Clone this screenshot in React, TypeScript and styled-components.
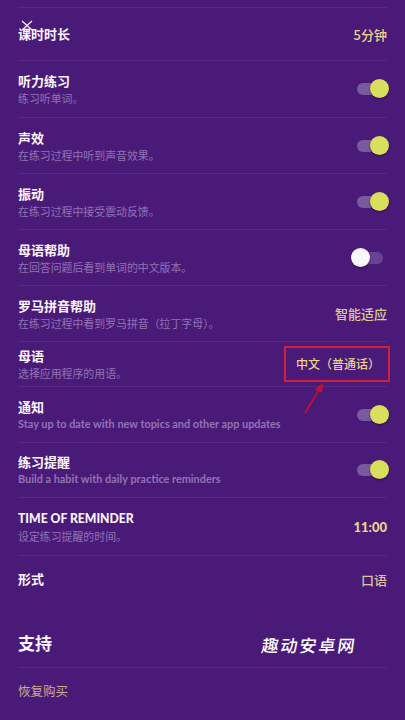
import React from "react";
import styled, { createGlobalStyle } from "styled-components";

const GlobalStyle = createGlobalStyle`
  html, body {
    margin: 0;
    padding: 0;
    background: #4a1a79;
  }
  body {
    font-family: Lato, "Noto Sans CJK SC", sans-serif;
    -webkit-font-smoothing: antialiased;
  }
`;

const Page = styled.div`
  position: relative;
  width: 405px;
  height: 720px;
  overflow: hidden;
  background: #4a1a79;
  box-sizing: border-box;
  padding: 7px 18px 0 18px;
`;

const List = styled.div`
  display: flex;
  flex-direction: column;
  border-top: 1px solid rgba(255, 255, 255, 0.07);
`;

const Row = styled.div<{ $h: number; $noLine?: boolean }>`
  display: flex;
  align-items: center;
  justify-content: space-between;
  height: ${(p) => p.$h}px;
  box-sizing: border-box;
  border-bottom: ${(p) =>
    p.$noLine ? "none" : "1px solid rgba(255, 255, 255, 0.07)"};
`;

const Texts = styled.div`
  display: flex;
  flex-direction: column;
  gap: 2px;
`;

const Title = styled.div<{ $caps?: boolean }>`
  color: #fbf7fd;
  font-family: ${(p) =>
    p.$caps ? 'Lato, "Noto Sans CJK SC", sans-serif' : '"Noto Sans CJK SC", sans-serif'};
  font-size: ${(p) => (p.$caps ? "12.2px" : "13px")};
  font-weight: ${(p) => (p.$caps ? 900 : 700)};
  line-height: 16px;
`;

const Sub = styled.div<{ $latin?: boolean }>`
  color: #9074b4;
  font-family: ${(p) =>
    p.$latin ? 'Lato, "Noto Sans CJK SC", sans-serif' : '"Noto Sans CJK SC", sans-serif'};
  font-size: 10.9px;
  font-weight: ${(p) => (p.$latin ? 700 : 400)};
  line-height: 14px;
`;

const Value = styled.div<{ $bold?: boolean; $tone?: string }>`
  color: ${(p) => p.$tone || "#ecd48c"};
  font-family: ${(p) =>
    p.$bold ? 'Lato, "Noto Sans CJK SC", sans-serif' : '"Noto Sans CJK SC", sans-serif'};
  font-size: 13px;
  font-weight: ${(p) => (p.$bold ? 900 : 500)};
`;

const Marked = styled(Value)`
  font-size: 12px;
  border: 2px solid #d21f3c;
  padding: 7px 8px 8px 10px;
  margin-right: -3px;
`;

const Switch = styled.div`
  position: relative;
  width: 38px;
  height: 20px;
  margin-right: -2px;
`;

const Track = styled.div<{ $on: boolean }>`
  position: absolute;
  left: 6px;
  right: 6px;
  top: 4px;
  height: 12px;
  border-radius: 6px;
  background: ${(p) => (p.$on ? "#7a5a9e" : "#6a4296")};
`;

const Thumb = styled.div<{ $on: boolean }>`
  position: absolute;
  top: 0;
  ${(p) => (p.$on ? "right: 0;" : "left: 0;")}
  width: 19px;
  height: 19px;
  border-radius: 50%;
  background: ${(p) => (p.$on ? "#d9df5c" : "#fbf8fd")};
  box-shadow: 0 1px 2px rgba(20, 0, 40, 0.55);
`;

const SectionRow = styled.div`
  display: flex;
  align-items: flex-end;
  justify-content: space-between;
  height: 66px;
  padding-bottom: 12px;
  box-sizing: border-box;
  border-bottom: 1px solid rgba(255, 255, 255, 0.07);
`;

const SectionTitle = styled.div`
  color: #fbf7fd;
  font-family: "Noto Sans CJK SC", sans-serif;
  font-size: 17px;
  font-weight: 700;
`;

const Watermark = styled.div`
  color: #ffffff;
  font-family: "Noto Sans CJK SC", sans-serif;
  font-size: 17px;
  font-weight: 500;
  letter-spacing: 2px;
  margin-right: 30px;
  transform: skewX(-8deg) translateY(2px);
`;

const LinkRow = styled.div`
  display: flex;
  align-items: center;
  height: 44px;
  color: #c8ae8c;
  font-family: "Noto Sans CJK SC", sans-serif;
  font-size: 12.5px;
`;

const CloseMark = styled.svg`
  position: absolute;
  left: 21px;
  top: 20px;
`;

const Arrow = styled.svg`
  position: absolute;
  left: 296px;
  top: 380px;
`;

const Toggle = ({ on }: { on: boolean }) => (
  <Switch>
    <Track $on={on} />
    <Thumb $on={on} />
  </Switch>
);

type Item = {
  title: string;
  sub?: string;
  latin?: boolean;
  caps?: boolean;
  h: number;
  toggle?: boolean;
  value?: string;
  bold?: boolean;
  tone?: string;
  marked?: boolean;
};

const items: Item[] = [
  { title: "课时时长", h: 53, value: "5分钟" },
  { title: "听力练习", sub: "练习听单词。", h: 57, toggle: true },
  { title: "声效", sub: "在练习过程中听到声音效果。", h: 56, toggle: true },
  { title: "振动", sub: "在练习过程中接受震动反馈。", h: 56, toggle: true },
  { title: "母语帮助", sub: "在回答问题后看到单词的中文版本。", h: 56, toggle: false },
  {
    title: "罗马拼音帮助",
    sub: "在练习过程中看到罗马拼音（拉丁字母）。",
    h: 56,
    value: "智能适应",
    tone: "#dccb8e",
  },
  { title: "母语", sub: "选择应用程序的用语。", h: 45, value: "中文（普通话）", marked: true },
  {
    title: "通知",
    sub: "Stay up to date with new topics and other app updates",
    latin: true,
    h: 56,
    toggle: true,
  },
  {
    title: "练习提醒",
    sub: "Build a habit with daily practice reminders",
    latin: true,
    h: 55,
    toggle: true,
  },
  { title: "TIME OF REMINDER", caps: true, sub: "设定练习提醒的时间。", h: 58, value: "11:00", bold: true },
  { title: "形式", h: 46, value: "口语", tone: "#dcc39e" },
];

export default function App() {
  return (
    <>
      <GlobalStyle />
      <Page>
        <List>
          {items.map((it, i) => (
            <Row key={it.title} $h={it.h} $noLine={i === items.length - 1}>
              <Texts>
                <Title $caps={it.caps}>{it.title}</Title>
                {it.sub && <Sub $latin={it.latin}>{it.sub}</Sub>}
              </Texts>
              {it.toggle !== undefined && <Toggle on={it.toggle} />}
              {it.value &&
                (it.marked ? (
                  <Marked>{it.value}</Marked>
                ) : (
                  <Value $bold={it.bold} $tone={it.tone}>
                    {it.value}
                  </Value>
                ))}
            </Row>
          ))}
        </List>

        <SectionRow>
          <SectionTitle>支持</SectionTitle>
          <Watermark>趣动安卓网</Watermark>
        </SectionRow>
        <LinkRow>恢复购买</LinkRow>

        <CloseMark width="12" height="11" viewBox="0 0 12 11">
          <path d="M1 1 L11 10 M11 1 L1 10" stroke="#f4eef8" strokeWidth="1.3" fill="none" />
        </CloseMark>

        <Arrow width="32" height="36" viewBox="0 0 32 36">
          <path d="M9 33 L23 10" stroke="#c8102e" strokeWidth="1.6" fill="none" />
          <path d="M27 3 L19 9 L26 13 Z" fill="#c8102e" />
        </Arrow>
      </Page>
    </>
  );
}
